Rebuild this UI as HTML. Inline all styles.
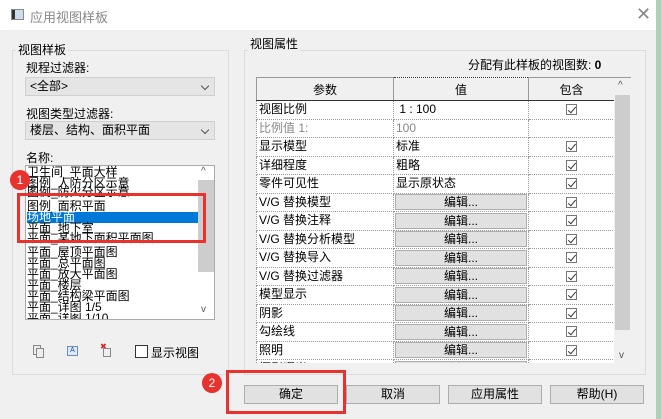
<!DOCTYPE html>
<html><head><meta charset="utf-8"><style>
*{margin:0;padding:0;box-sizing:border-box}
body{width:661px;height:419px;overflow:hidden;background:#f0f0f0;font-family:"Liberation Sans","Noto Sans CJK SC",sans-serif;font-size:12px;color:#000;position:relative}
.a{position:absolute;white-space:nowrap}
.grp{position:absolute;border:1px solid #dcdcdc}
.lbl{position:absolute;background:#f0f0f0;padding:0 2px;line-height:14px}
.dd{position:absolute;background:#e5e5e5;border:1px solid #d0d0d0;height:19px;line-height:17px;padding-left:4px}
.dd:after{content:"";position:absolute;right:6px;top:5px;width:5px;height:5px;border-right:1px solid #555;border-bottom:1px solid #555;transform:rotate(45deg)}
.li{position:absolute;left:27px;line-height:11px;font-size:12px}
table{border-collapse:collapse;position:absolute;left:256px;top:77px;width:358px;table-layout:fixed;background:#fff}
td{height:18.5px;border:1px dotted #999;padding:0 2px;line-height:17px;overflow:hidden;white-space:nowrap}
th{height:23px;font-weight:normal;border:1px solid #999;background:#f0f0f0;border-bottom:1.5px solid #333}
.ed{background:#e1e1e1;border:1px solid #adadad;text-align:center;height:16px;line-height:14px;margin:0 -1px}
.cb{display:block;margin:0 auto;width:11px;height:11px;border:1px solid #777;position:relative}
.cb:after{content:"";position:absolute;left:3px;top:0px;width:3px;height:7px;border-right:1px solid #333;border-bottom:1px solid #333;transform:rotate(40deg)}
.btn{position:absolute;top:385px;width:94px;height:19px;background:#e1e1e1;border:1px solid #adadad;text-align:center;line-height:17px}
.red{position:absolute;border:3px solid #e8322e}
.circ{position:absolute;width:20px;height:20px;border-radius:50%;background:#e8322e;color:#fff;text-align:center;line-height:20px;font-size:12px}
</style></head><body>
<div class="a" style="left:0;top:0;width:661px;height:30px;background:#fff"></div>
<div class="a" style="left:11px;top:9px;width:13px;height:11px;border:1px solid #888;background:linear-gradient(90deg,#333 0 3px,#cde 3px)"></div>
<div class="a" style="left:30px;top:7px;color:#888;font-size:13px">应用视图样板</div>
<div class="a" style="left:636px;top:4px;color:#888;font-size:18px">✕</div>
<div class="a" style="left:656px;top:0;width:5px;height:419px;background:#a9d3b8"></div>

<div class="grp" style="left:12px;top:50px;width:217px;height:325px"></div>
<div class="lbl" style="left:16px;top:43px">视图样板</div>
<div class="a" style="left:26px;top:59px">规程过滤器:</div>
<div class="dd" style="left:25px;top:77px;width:190px">&lt;全部&gt;</div>
<div class="a" style="left:26px;top:105px">视图类型过滤器:</div>
<div class="dd" style="left:25px;top:121px;width:190px">楼层、结构、面积平面</div>
<div class="a" style="left:26px;top:149px">名称:</div>
<div class="a" style="left:25px;top:165px;width:190px;height:155px;background:#fff;border:1px solid #aaa;overflow:hidden">
 <div class="a" style="left:172px;top:14px;width:16px;height:92px;background:#cdcdcd"></div>
 <div class="a" style="left:175px;top:0px;font-size:10px;color:#555">^</div>
 <div class="a" style="left:175px;top:138px;font-size:10px;color:#555">v</div>
</div>
<div class="a" style="left:27px;top:212px;width:171px;height:11px;background:#0078d7"></div>
<div class="li" style="top:167px">卫生间_平面大样</div>
<div class="li" style="top:178px">图例_人防分区示意</div>
<div class="li" style="top:187px">图例_防火分区示意</div>
<div class="li" style="top:201px">图例_面积平面</div>
<div class="li" style="top:212px;color:#fff">场地平面</div>
<div class="li" style="top:223px">平面_地下室</div>
<div class="li" style="top:233px">平面_某地下面积平面图</div>
<div class="li" style="top:247px">平面_屋顶平面图</div>
<div class="li" style="top:258px">平面_总平面图</div>
<div class="li" style="top:269px">平面_放大平面图</div>
<div class="li" style="top:280px">平面_楼层</div>
<div class="li" style="top:291px">平面_结构梁平面图</div>
<div class="li" style="top:302px">平面_详图 1/5</div>
<div class="li" style="top:313px;height:6px;overflow:hidden">平面_详图 1/10</div>
<div class="red" style="left:17px;top:193px;width:189px;height:50px"></div>
<div class="circ" style="left:10px;top:170px">1</div>
<div class="a" style="left:33px;top:345px;width:8px;height:10px;border:1px solid #888;background:#eee"></div>
<div class="a" style="left:36px;top:348px;width:8px;height:10px;border:1px solid #888;background:#eee"></div>
<div class="a" style="left:67px;top:346px;width:11px;height:10px;border:1px solid #6a8fbf;background:#dfe8f5;font-size:7px;line-height:8px;color:#2050a0;text-align:center">A</div>
<div class="a" style="left:100px;top:342px;font-size:8px;color:#d22">✖</div>
<div class="a" style="left:103px;top:348px;width:8px;height:9px;border:1px solid #888;background:#eee"></div>
<div class="a" style="left:135px;top:345px;width:13px;height:13px;border:1px solid #333;background:#fff"></div>
<div class="a" style="left:151px;top:344px;font-size:12px">显示视图</div>

<div class="grp" style="left:244px;top:50px;width:402px;height:325px"></div>
<div class="lbl" style="left:248px;top:37px">视图属性</div>
<div class="a" style="left:468px;top:56px">分配有此样板的视图数: <b>0</b></div>
<div class="a" style="left:614px;top:77px;width:17px;height:286px;background:#f0f0f0;border-top:1px solid #999"></div>
<div class="a" style="left:615px;top:95px;width:15px;height:235px;background:#cdcdcd"></div>
<div class="a" style="left:618px;top:80px;font-size:10px;color:#555">^</div>
<div class="a" style="left:619px;top:350px;font-size:10px;color:#555">v</div>
<div class="a" style="left:256px;top:77px;width:358px;height:286px;overflow:hidden">
<table style="left:0;top:0">
<colgroup><col style="width:137px"><col style="width:135px"><col style="width:86px"></colgroup>
<tr><th>参数</th><th style="border:1px dotted #333;border-bottom:1.5px solid #333">值</th><th>包含</th></tr>
<tr><td>视图比例</td><td>&nbsp;1 : 100</td><td><i class="cb"></i></td></tr>
<tr><td style="color:#888">比例值 1:</td><td style="color:#888">100</td><td></td></tr>
<tr><td>显示模型</td><td>标准</td><td><i class="cb"></i></td></tr>
<tr><td>详细程度</td><td>粗略</td><td><i class="cb"></i></td></tr>
<tr><td>零件可见性</td><td>显示原状态</td><td><i class="cb"></i></td></tr>
<tr><td>V/G 替换模型</td><td><div class="ed">编辑...</div></td><td><i class="cb"></i></td></tr>
<tr><td>V/G 替换注释</td><td><div class="ed">编辑...</div></td><td><i class="cb"></i></td></tr>
<tr><td>V/G 替换分析模型</td><td><div class="ed">编辑...</div></td><td><i class="cb"></i></td></tr>
<tr><td>V/G 替换导入</td><td><div class="ed">编辑...</div></td><td><i class="cb"></i></td></tr>
<tr><td>V/G 替换过滤器</td><td><div class="ed">编辑...</div></td><td><i class="cb"></i></td></tr>
<tr><td>模型显示</td><td><div class="ed">编辑...</div></td><td><i class="cb"></i></td></tr>
<tr><td>阴影</td><td><div class="ed">编辑...</div></td><td><i class="cb"></i></td></tr>
<tr><td>勾绘线</td><td><div class="ed">编辑...</div></td><td><i class="cb"></i></td></tr>
<tr><td>照明</td><td><div class="ed">编辑...</div></td><td><i class="cb"></i></td></tr>
<tr><td>摄影曝光</td><td><div class="ed">编辑...</div></td><td></td></tr>
</table></div>

<div class="btn" style="left:244px">确定</div>
<div class="btn" style="left:346px">取消</div>
<div class="btn" style="left:448px">应用属性</div>
<div class="btn" style="left:550px">帮助(H)</div>
<div class="red" style="left:226px;top:370px;width:120px;height:44px"></div>
<div class="circ" style="left:202px;top:373px">2</div>
</body></html>
